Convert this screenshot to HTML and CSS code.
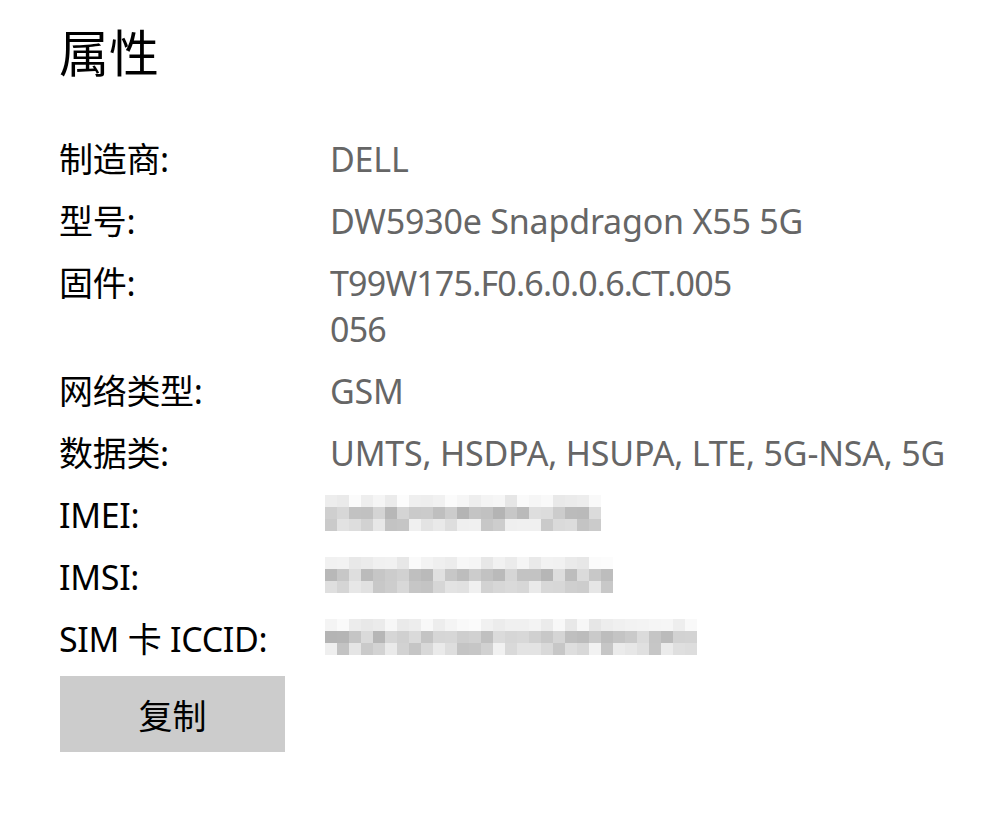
FILE: index.html
```html
<!DOCTYPE html>
<html lang="zh-CN">
<head>
<meta charset="utf-8">
<title>属性</title>
<link rel="stylesheet" href="styles.css">
</head>
<body>
<main class="page">
  <h1 class="title">属性</h1>
  <dl class="props">
    <div class="row"><dt>制造商:</dt><dd>DELL</dd></div>
    <div class="row"><dt>型号:</dt><dd>DW5930e Snapdragon X55 5G</dd></div>
    <div class="row"><dt>固件:</dt><dd class="tight">T99W175.F0.6.0.0.6.CT.005<br>056</dd></div>
    <div class="row"><dt>网络类型:</dt><dd>GSM</dd></div>
    <div class="row"><dt>数据类:</dt><dd>UMTS, HSDPA, HSUPA, LTE, 5G-NSA, 5G</dd></div>
    <div class="row"><dt>IMEI:</dt><dd><span class="blur" data-cols="23" data-seed="3"></span></dd></div>
    <div class="row"><dt>IMSI:</dt><dd><span class="blur" data-cols="24" data-seed="7"></span></dd></div>
    <div class="row"><dt>SIM 卡 ICCID:</dt><dd><span class="blur wide" data-cols="31" data-seed="11"></span></dd></div>
  </dl>
  <button class="copy" type="button">复制</button>
</main>
<script src="script.js"></script>
</body>
</html>
```
FILE: styles.css
```css
html, body {
  margin: 0;
  padding: 0;
  background: #ffffff;
}
body {
  font-family: "Noto Sans", "Open Sans", "Noto Sans CJK SC", sans-serif;
  color: #000;
}
.page {
  padding: 18px 0 0 59px;
}
.title {
  margin: 0;
  font-family: "Noto Sans CJK SC", sans-serif;
  font-weight: 400;
  font-size: 50px;
  line-height: 64px;
}
.props {
  margin: 54px 0 0 0;
  display: flex;
  flex-direction: column;
  gap: 16px;
}
.row {
  display: flex;
  font-size: 34px;
  line-height: 46px;
}
dt {
  width: 271px;
  flex: none;
  font-family: "Noto Sans", "Noto Sans CJK SC", sans-serif;
  color: #000;
  letter-spacing: -0.3px;
}
dd {
  margin: 0;
  color: #666666;
  letter-spacing: -0.2px;
}
dd.tight {
  letter-spacing: -0.8px;
}
.blur {
  display: flex;
  flex-direction: column;
  margin-left: -5px;
  padding-top: 3px;
}
.blur-row {
  display: flex;
}
.cell {
  width: 12px;
  height: 12px;
  flex: none;
}
.copy {
  margin: 14px 0 0 1px;
  width: 225px;
  height: 76px;
  border: none;
  background: #cccccc;
  font-family: "Noto Sans CJK SC", sans-serif;
  font-size: 34px;
  color: #000;
  padding: 0;
  display: block;
}
```
FILE: script.js
```js
document.querySelectorAll('.blur').forEach(function (el) {
  var cols = parseInt(el.dataset.cols, 10);
  var s = parseInt(el.dataset.seed, 10);
  function rnd() { s = (s * 9301 + 49297) % 233280; return s / 233280; }
  var rows = [[0.90, 0.99], [0.70, 0.88], [0.76, 0.95]];
  rows.forEach(function (range) {
    var r = document.createElement('div');
    r.className = 'blur-row';
    for (var i = 0; i < cols; i++) {
      var c = document.createElement('span');
      c.className = 'cell';
      var v = Math.round(255 * (range[0] + (range[1] - range[0]) * rnd()));
      c.style.background = 'rgb(' + v + ',' + v + ',' + v + ')';
      r.appendChild(c);
    }
    el.appendChild(r);
  });
});
```
